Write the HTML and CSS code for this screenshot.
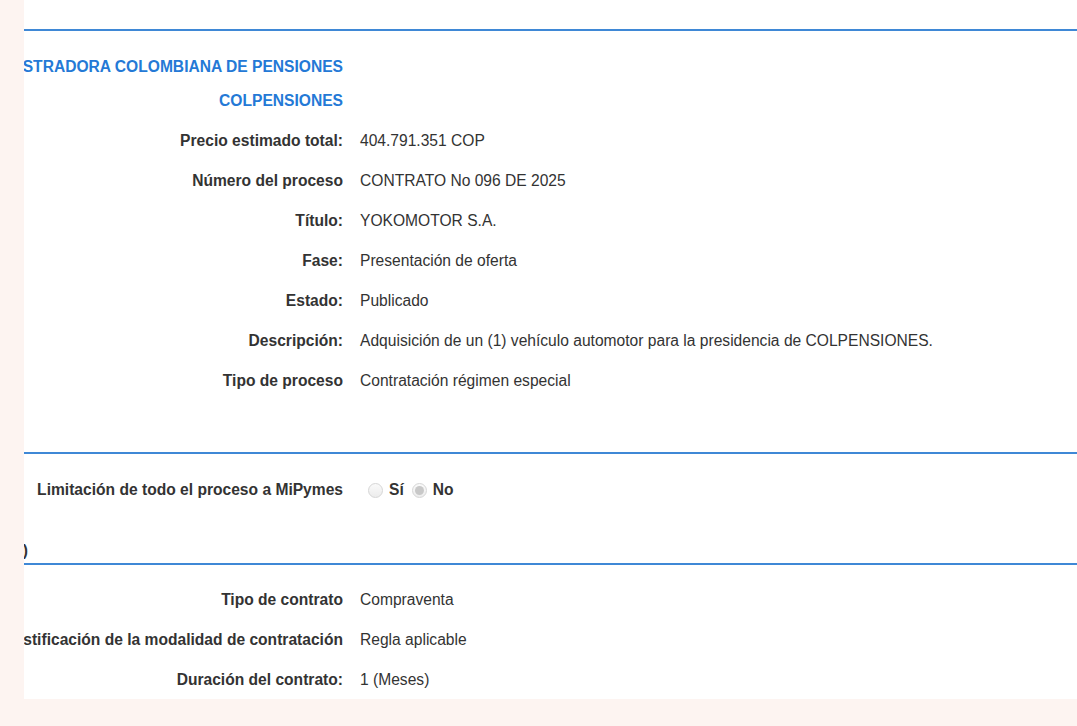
FILE: index.html
```html
<!DOCTYPE html>
<html lang="es">
<head>
<meta charset="utf-8">
<title>Proceso</title>
<link rel="stylesheet" href="styles.css">
</head>
<body>
<div class="page">
  <div class="panel">
    <div class="rule first"></div>
    <section class="sec sec1">
      <div class="hrow"><div class="lab"><span>ADMINISTRADORA COLOMBIANA DE PENSIONES</span></div></div>
      <div class="hrow"><div class="lab"><span>COLPENSIONES</span></div></div>
      <div class="row row-first"><div class="lab"><span>Precio estimado total:</span></div><div class="val">404.791.351 COP</div></div>
      <div class="row"><div class="lab"><span>Número del proceso</span></div><div class="val">CONTRATO No 096 DE 2025</div></div>
      <div class="row"><div class="lab"><span>Título:</span></div><div class="val">YOKOMOTOR S.A.</div></div>
      <div class="row"><div class="lab"><span>Fase:</span></div><div class="val">Presentación de oferta</div></div>
      <div class="row"><div class="lab"><span>Estado:</span></div><div class="val">Publicado</div></div>
      <div class="row"><div class="lab"><span>Descripción:</span></div><div class="val">Adquisición de un (1) vehículo automotor para la presidencia de COLPENSIONES.</div></div>
      <div class="row"><div class="lab"><span>Tipo de proceso</span></div><div class="val">Contratación régimen especial</div></div>
    </section>
    <div class="rule"></div>
    <section class="sec sec2">
      <div class="row"><div class="lab"><span>Limitación de todo el proceso a MiPymes</span></div>
        <div class="val radios">
          <span class="radio"></span><span class="rlab">Sí</span>
          <span class="radio on"></span><span class="rlab">No</span>
        </div>
      </div>
    </section>
    <div class="sechead"><span>Información del contrato (Opcional)</span></div>
    <div class="rule"></div>
    <section class="sec sec3">
      <div class="row"><div class="lab"><span>Tipo de contrato</span></div><div class="val">Compraventa</div></div>
      <div class="row"><div class="lab"><span>Justificación de la modalidad de contratación</span></div><div class="val">Regla aplicable</div></div>
      <div class="row"><div class="lab"><span>Duración del contrato:</span></div><div class="val">1 (Meses)</div></div>
    </section>
  </div>
</div>
</body>
</html>
```
FILE: styles.css
```css
html, body {
  margin: 0;
  padding: 0;
  background: #fdf4f1;
}
body {
  width: 1077px;
  height: 726px;
  overflow: hidden;
  font-family: "Liberation Sans", Arial, sans-serif;
  font-size: 15.6px;
  color: #333;
}
.page {
  padding-left: 24px;
}
.panel {
  background: #fff;
  height: 699px;
  overflow: hidden;
  display: flex;
  flex-direction: column;
}
.rule {
  height: 2px;
  background: #3f88d6;
  flex: none;
}
.rule.first {
  margin-top: 29px;
}
.hrow, .row {
  display: flex;
  align-items: center;
}
.hrow {
  height: 34px;
}
.row {
  height: 40px;
}
.row-first {
  margin-top: 3px;
}
.lab {
  width: 319px;
  flex: none;
  display: flex;
  justify-content: flex-end;
  white-space: nowrap;
  font-weight: bold;
}
.hrow .lab {
  color: #2479d6;
}
.val {
  padding-left: 17px;
  white-space: nowrap;
}
.sec1 {
  padding-top: 19px;
  padding-bottom: 51px;
}
.sec2 {
  padding-top: 16px;
}
.radios {
  display: flex;
  align-items: center;
  padding-left: 25px;
  font-weight: bold;
}
.radio {
  width: 15px;
  height: 15px;
  border-radius: 50%;
  border: 1px solid #d6d6d6;
  background: linear-gradient(#fafafa, #ececec);
  box-sizing: border-box;
  display: inline-flex;
  align-items: center;
  justify-content: center;
}
.radio.on::after {
  content: "";
  width: 9px;
  height: 9px;
  border-radius: 50%;
  background: #c8c8c8;
}
.rlab {
  margin-left: 6px;
  margin-right: 8px;
}
.sechead {
  width: 4px;
  display: flex;
  justify-content: flex-end;
  white-space: nowrap;
  font-weight: bold;
  height: 18px;
  align-items: center;
  margin-top: 32px;
  margin-bottom: 3px;
}
.sec3 {
  padding-top: 15px;
}
```
